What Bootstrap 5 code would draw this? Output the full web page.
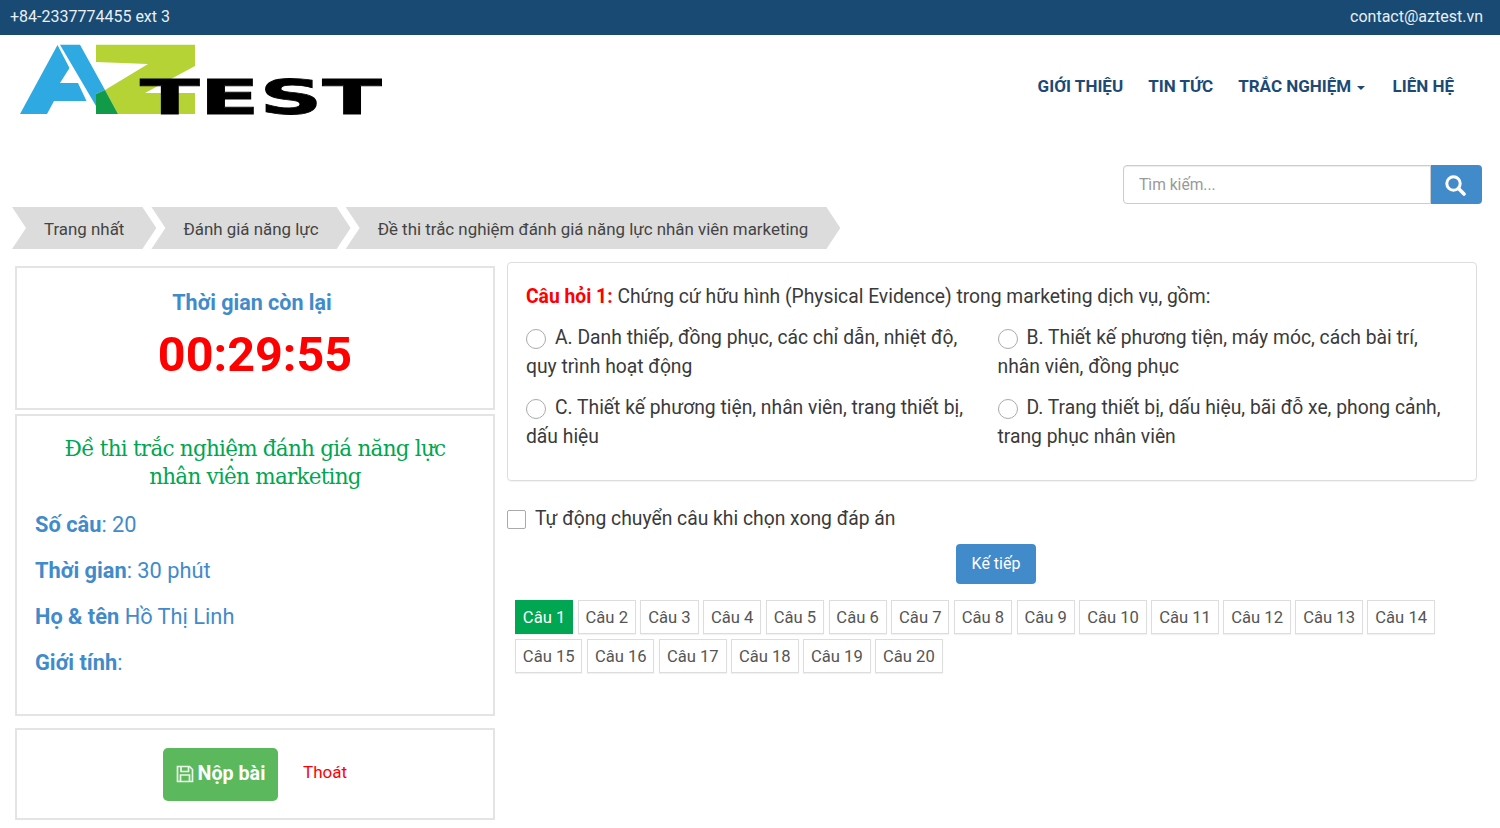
<!DOCTYPE html>
<html lang="vi">
<head>
  <meta charset="UTF-8">
  <meta name="viewport" content="width=device-width, initial-scale=1.0">
  <title>Đề thi trắc nghiệm đánh giá năng lực nhân viên marketing</title>
  <link rel="stylesheet" href="https://cdn.jsdelivr.net/npm/bootstrap@5.3.0/dist/css/bootstrap.min.css">
  <style>
    html, body { height: 828px; overflow: hidden; }
    body { font-family: Roboto, "Liberation Sans", sans-serif; font-size: 19.3px; color: #3a3a3a; background: #fff; }
    .top-strip { height: 35px; background: #184a73; color: #e9eff4; font-size: 16px; padding: 0 17px 2px 10px; }
    .head-row { height: 91px; padding: 9px 46px 0 20px; }
    .logo-svg { display: block; width: 362px; height: 82px; }
    .logo-word { font-family: "DejaVu Sans", sans-serif; font-weight: 700; font-size: 48px; stroke: #000; stroke-width: .8px; }
    .top-menu { padding-top: 29px; }
    .menu-link { color: #1d4a75; font-weight: 700; font-size: 17px; line-height: 27px; text-decoration: none; margin-left: 25px; }
    .menu-caret { display: inline-block; border-top: 4px solid #1d4a75; border-left: 4.5px solid transparent; border-right: 4.5px solid transparent; vertical-align: middle; margin: 0 2px; }
    .find-row { padding: 39px 18px 0 0; height: 78px; }
    .find-box { width: 359px; }
    .find-box .form-control { height: 39px; font-size: 15.6px; padding: 0 0 0 15px; border-color: #ccc; border-radius: 4px 0 0 4px; box-shadow: inset 0 1px 1px rgba(0,0,0,.075); }
    .find-box .form-control::placeholder { color: #999; }
    .find-btn { width: 51px; height: 39px; background: #428bca; border: 0; border-radius: 0 4px 4px 0; padding: 0 3px 0 0; }
    .crumb-row { padding: 3px 0 0 12px; height: 45px; }
    .crumb-item { height: 42px; background: #dcdcdc; color: #444; font-size: 16.9px; line-height: 45px; margin-right: -5px; padding: 0 32px; clip-path: polygon(0 0, calc(100% - 14px) 0, 100% 50%, calc(100% - 14px) 100%, 0 100%, 14px 50%); white-space: nowrap; }
    .page-body { padding: 13px 23px 0 15px; gap: 12px; }
    .side-col { width: 480px; flex: none; padding-top: 4px; }
    .main-col { flex: 1; min-width: 0; }
    .side-box { border: 2px solid #e4e4e4; }
    .time-box { height: 144px; padding-top: 20px; }
    .time-label { color: #428bca; font-weight: 700; font-size: 21.5px; line-height: 30px; padding-right: 6px; }
    .time-value { color: #f00; font-weight: 700; font-size: 48.5px; line-height: 60px; margin-top: 7px; }
    .info-box { height: 302px; margin-top: 4px; padding: 19px 18px 0; }
    .exam-title { color: #00a651; font-family: "DejaVu Serif", serif; font-size: 21.5px; letter-spacing: -.75px; line-height: 28px; text-align: center; margin-bottom: 19px; }
    .info-line { color: #428bca; font-size: 21.8px; line-height: 30px; margin-bottom: 16.1px; }
    .info-line b { font-weight: 700; }
    .send-box { height: 92px; margin-top: 12px; padding-top: 18px; gap: 25px; }
    .send-btn { width: 115px; height: 53px; background: #5cb85c; border: 0; border-radius: 5px; color: #fff; font-weight: 700; font-size: 19.7px; padding: 0 0 2px; gap: 4px; }
    .quit-link { color: #f00; font-size: 17px; line-height: 20px; text-decoration: none; margin-top: 14px; }
    .quest-box { height: 219px; border: 1px solid #ddd; border-radius: 4px; padding: 19px 0 0 18px; box-shadow: 0 1px 1px rgba(0,0,0,.05); }
    .quest-head { line-height: 29px; margin-bottom: 12px; }
    .quest-head b { color: #f00; font-weight: 700; }
    .answer-item { line-height: 29px; padding-right: 8px; margin-bottom: 12px; }
    .answer-col { width: 471.5px; }
    .radio-dot { display: inline-block; width: 20px; height: 20px; border: 1.5px solid #aaa; border-radius: 50%; vertical-align: -5px; margin-right: 9px; }
    .auto-row { margin-top: 23px; line-height: 30px; gap: 9px; }
    .tick-box { width: 19px; height: 19px; border: 1.5px solid #aaa; border-radius: 2px; }
    .next-btn { width: 80px; height: 40px; background: #428bca; border: 0; border-radius: 4px; color: #fff; font-size: 16px; padding: 0; }
    .next-row { margin-top: 10px; padding-left: 8px; }
    .num-grid { padding: 15.5px 0 0 8px; gap: 5px 4.6px; width: 935px; }
    .num-item { height: 34px; border: 1px solid #ddd; background: #fff; color: #555; font-size: 16.6px; line-height: 34px; padding: 0 6.85px; box-shadow: 0 1px 1px rgba(0,0,0,.05); }
    .num-on { background: #00a651; border-color: #00a651; color: #fff; }
  </style>
</head>
<body>
  <div class="top-strip d-flex justify-content-between align-items-center">
    <span>+84-2337774455 ext 3</span>
    <span>contact@aztest.vn</span>
  </div>

  <div class="head-row d-flex justify-content-between align-items-start">
    <svg class="logo-svg" viewBox="0 0 362 82" aria-label="AZ Test">
      <polygon points="37.500,1 49.500,24 40,39 58,39 66.500,57 34,57 27,70 0,70" fill="#2fa9e1"/>
      <polygon points="40,0.700 60,0.700 85,46 76,50 76,62" fill="#2fa9e1"/>
      <polygon points="76,0.700 175,0.700 175,22 125,49 175,49 175,70 98,70 85,46 128,20 76,18" fill="#b5d334"/>
      <polygon points="76,50 85,46 98,70 76,70" fill="#119a48"/>
      <text class="logo-word" x="120" y="70" textLength="242" lengthAdjust="spacingAndGlyphs">TEST</text>
    </svg>
    <nav class="top-menu d-flex align-items-center">
      <a class="menu-link" href="#">GIỚI THIỆU</a>
      <a class="menu-link" href="#">TIN TỨC</a>
      <a class="menu-link" href="#">TRẮC NGHIỆM <span class="menu-caret"></span></a>
      <a class="menu-link" href="#">LIÊN HỆ</a>
    </nav>
  </div>

  <div class="find-row d-flex justify-content-end">
    <div class="find-box d-flex">
      <input class="form-control" type="text" placeholder="Tìm kiếm...">
      <button class="find-btn d-flex align-items-center justify-content-center flex-shrink-0" type="button" aria-label="Tìm kiếm">
        <svg width="22" height="22" viewBox="0 0 22 22" fill="none" stroke="#fff"><circle cx="9.500" cy="9.500" r="6.700" stroke-width="3"/><path d="M14.500 14.500l5.500 5.500" stroke-width="3.600" stroke-linecap="round"/></svg>
      </button>
    </div>
  </div>

  <div class="crumb-row d-flex">
    <div class="crumb-item">Trang nhất</div>
    <div class="crumb-item">Đánh giá năng lực</div>
    <div class="crumb-item">Đề thi trắc nghiệm đánh giá năng lực nhân viên marketing</div>
  </div>

  <div class="page-body d-flex">
    <div class="side-col">
      <div class="side-box time-box text-center">
        <div class="time-label">Thời gian còn lại</div>
        <div class="time-value">00:29:55</div>
      </div>
      <div class="side-box info-box">
        <div class="exam-title">Đề thi trắc nghiệm đánh giá năng lực<br>nhân viên marketing</div>
        <div class="info-line"><b>Số câu</b>: 20</div>
        <div class="info-line"><b>Thời gian</b>: 30 phút</div>
        <div class="info-line"><b>Họ &amp; tên</b> Hồ Thị Linh</div>
        <div class="info-line"><b>Giới tính</b>:</div>
      </div>
      <div class="side-box send-box d-flex justify-content-center align-items-start">
        <button class="send-btn d-flex align-items-center justify-content-center" type="button">
          <svg width="18" height="18" viewBox="0 0 18 18" fill="none" stroke="#e9f5e9" stroke-width="1.700"><path d="M1.500 1.500h12l3 3v12h-15z"/><path d="M5 1.500v5h7.500v-5M4.500 16.500v-6.500h9v6.500"/></svg>
          Nộp bài
        </button>
        <a class="quit-link" href="#">Thoát</a>
      </div>
    </div>

    <div class="main-col">
      <div class="quest-box">
        <div class="quest-head"><b>Câu hỏi 1:</b> Chứng cứ hữu hình (Physical Evidence) trong marketing dịch vụ, gồm:</div>
        <div class="d-flex flex-wrap">
          <div class="answer-col answer-item"><span class="radio-dot"></span>A. Danh thiếp, đồng phục, các chỉ dẫn, nhiệt độ, quy trình hoạt động</div>
          <div class="answer-col answer-item"><span class="radio-dot"></span>B. Thiết kế phương tiện, máy móc, cách bài trí, nhân viên, đồng phục</div>
          <div class="answer-col answer-item"><span class="radio-dot"></span>C. Thiết kế phương tiện, nhân viên, trang thiết bị, dấu hiệu</div>
          <div class="answer-col answer-item"><span class="radio-dot"></span>D. Trang thiết bị, dấu hiệu, bãi đỗ xe, phong cảnh, trang phục nhân viên</div>
        </div>
      </div>
      <div class="auto-row d-flex align-items-center"><span class="tick-box"></span>Tự động chuyển câu khi chọn xong đáp án</div>
      <div class="next-row text-center"><button class="next-btn" type="button">Kế tiếp</button></div>
      <div class="num-grid d-flex flex-wrap">
        <span class="num-item num-on">Câu 1</span>
        <span class="num-item">Câu 2</span>
        <span class="num-item">Câu 3</span>
        <span class="num-item">Câu 4</span>
        <span class="num-item">Câu 5</span>
        <span class="num-item">Câu 6</span>
        <span class="num-item">Câu 7</span>
        <span class="num-item">Câu 8</span>
        <span class="num-item">Câu 9</span>
        <span class="num-item">Câu 10</span>
        <span class="num-item">Câu 11</span>
        <span class="num-item">Câu 12</span>
        <span class="num-item">Câu 13</span>
        <span class="num-item">Câu 14</span>
        <span class="num-item">Câu 15</span>
        <span class="num-item">Câu 16</span>
        <span class="num-item">Câu 17</span>
        <span class="num-item">Câu 18</span>
        <span class="num-item">Câu 19</span>
        <span class="num-item">Câu 20</span>
      </div>
    </div>
  </div>
  <script src="https://cdn.jsdelivr.net/npm/bootstrap@5.3.0/dist/js/bootstrap.bundle.min.js"></script>
</body>
</html>
